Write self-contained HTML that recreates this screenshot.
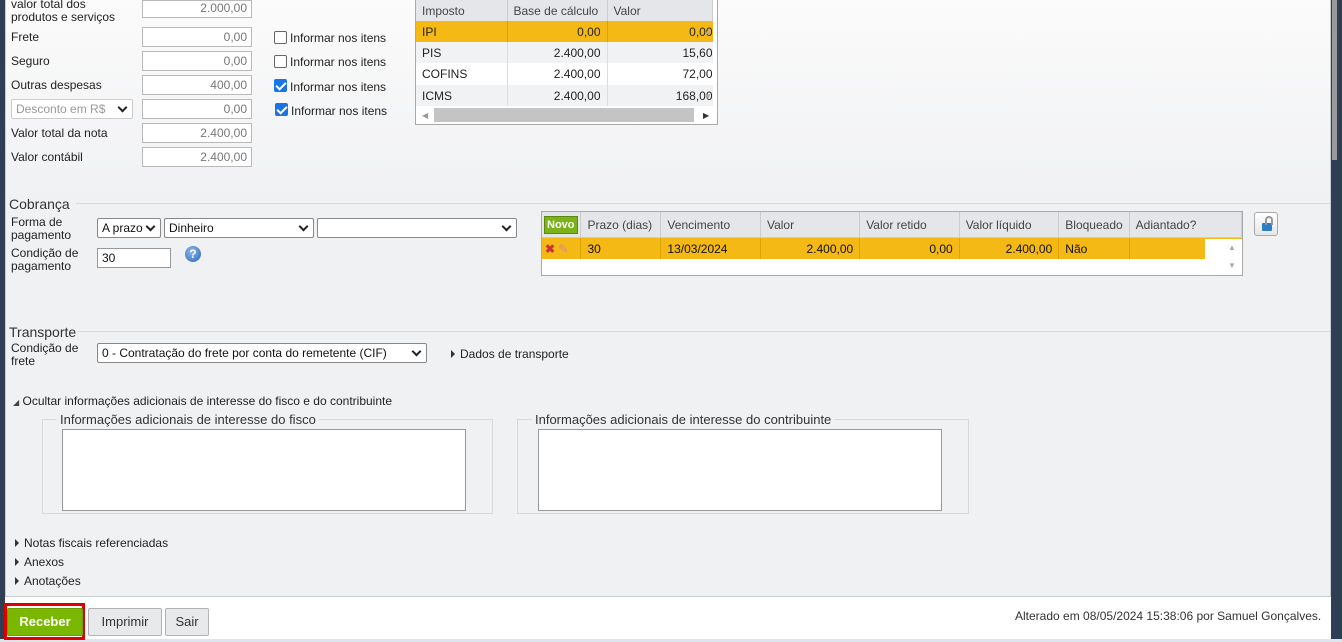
<!DOCTYPE html>
<html><head><meta charset="utf-8"><style>
*{box-sizing:border-box;margin:0;padding:0}
body{width:1342px;height:642px;overflow:hidden;background:#fff;font-family:"Liberation Sans",Verdana,sans-serif;font-size:12px;color:#222;position:relative}
.a{position:absolute}
.inp{position:absolute;background:#fff;border:1px solid #b9b9b9;height:20px;text-align:right;padding:2px 4px;color:#777;font-size:12px;width:110px}
.lbl{position:absolute;font-size:12px;color:#222}
.sel{position:absolute;background:#fff;border:1px solid #888;border-radius:2px;height:20px;padding:2px 4px;font-size:12px;color:#111}
.sel:after{content:"";position:absolute;right:6px;top:4px;width:5px;height:5px;border-right:2px solid #222;border-bottom:2px solid #222;transform:rotate(45deg)}
.cb{position:absolute;width:13px;height:13px;border:1px solid #666;border-radius:2px;background:#fff}
.cb.on{background:#1a73e8;border-color:#1a73e8}
.cb.on:after{content:"";position:absolute;left:3px;top:0px;width:4px;height:8px;border-right:2px solid #fff;border-bottom:2px solid #fff;transform:rotate(45deg)}
.hr{position:absolute;height:1px;background:#d6d8db}
.tri{display:inline-block;width:0;height:0;border-top:4px solid transparent;border-bottom:4px solid transparent;border-left:4px solid #333;margin-right:5px;vertical-align:0}
td,th{font-weight:normal;text-align:left;padding:0 6px;white-space:nowrap}
</style></head><body>
<div class="a" style="left:0;top:0;width:5px;height:642px;background:#2e3f55"></div>
<div class="a" style="left:1331px;top:0;width:11px;height:642px;background:#2e3f55"></div>
<div class="a" style="left:1332px;top:0;width:5px;height:160px;background:#9a9a9a"></div>
<div class="a" style="left:5px;top:0;width:1326px;height:597px;background:#f0f1f3;border:1px solid #c9ccd0;border-top:none"></div>
<div class="a" style="left:6px;top:0;width:1324px;height:200px;background:linear-gradient(#fbfbfb,#f0f1f3)"></div>
<div class="a" style="left:5px;top:597px;width:1326px;height:45px;background:#fff"></div>
<div class="a" style="left:0;top:639px;width:1342px;height:3px;background:#dfe5ee"></div>

<div class="lbl" style="left:11px;top:-2px;line-height:13px">valor total dos<br>produtos e serviços</div>
<div class="inp" style="left:142px;top:0px;height:18px;padding-top:0">2.000,00</div>
<div class="lbl" style="left:11px;top:30px">Frete</div><div class="inp" style="left:142px;top:27px">0,00</div>
<div class="lbl" style="left:11px;top:54px">Seguro</div><div class="inp" style="left:142px;top:51px">0,00</div>
<div class="lbl" style="left:11px;top:78px">Outras despesas</div><div class="inp" style="left:142px;top:75px">400,00</div>
<div class="sel" style="left:11px;top:99px;width:122px;border-color:#ccc;color:#999">Desconto em R$</div>
<div class="inp" style="left:142px;top:99px">0,00</div>
<div class="lbl" style="left:11px;top:126px">Valor total da nota</div><div class="inp" style="left:142px;top:123px">2.400,00</div>
<div class="lbl" style="left:11px;top:150px">Valor contábil</div><div class="inp" style="left:142px;top:147px">2.400,00</div>

<div class="cb" style="left:274px;top:31px"></div><div class="lbl" style="left:290px;top:31px">Informar nos itens</div>
<div class="cb" style="left:274px;top:55px"></div><div class="lbl" style="left:290px;top:55px">Informar nos itens</div>
<div class="cb on" style="left:274px;top:79px"></div><div class="lbl" style="left:290px;top:80px">Informar nos itens</div>
<div class="cb on" style="left:275px;top:103px"></div><div class="lbl" style="left:291px;top:104px">Informar nos itens</div>

<div class="a" style="left:415px;top:0;width:303px;height:125px;border:1px solid #a9a9a9;border-top:none;background:#fff;overflow:hidden">
<table style="border-collapse:collapse;font-size:12px;width:297px">
<tr style="height:21px;background:#e4e6e9;color:#444"><th style="width:91px;border-right:1px solid #ccc">Imposto</th><th style="width:100px;border-right:1px solid #ccc">Base de cálculo</th><th style="border-right:1px solid #ccc">Valor</th></tr>
<tr style="height:21px;background:#f4b914"><td style="border-right:1px solid #e0a000">IPI</td><td style="text-align:right;border-right:1px solid #e0a000">0,00</td><td style="text-align:right;padding-right:0">0,00</td></tr>
<tr style="height:21px;background:#f1f2f4"><td style="border-right:1px solid #ddd">PIS</td><td style="text-align:right;border-right:1px solid #ddd">2.400,00</td><td style="text-align:right;padding-right:0">15,60</td></tr>
<tr style="height:22px;background:#fff"><td style="border-right:1px solid #ddd">COFINS</td><td style="text-align:right;border-right:1px solid #ddd">2.400,00</td><td style="text-align:right;padding-right:0">72,00</td></tr>
<tr style="height:21px;background:#f1f2f4"><td style="border-right:1px solid #ddd">ICMS</td><td style="text-align:right;border-right:1px solid #ddd">2.400,00</td><td style="text-align:right;padding-right:0">168,00</td></tr>
</table>
<div class="a" style="left:18px;top:108px;width:260px;height:14px;background:#c4c4c4"></div>
<div class="a" style="left:6px;top:111px;font-size:8px;color:#999">◀</div>
<div class="a" style="left:287px;top:111px;font-size:8px;color:#333">▶</div>
<div class="a" style="left:288px;top:27px;font-size:8px;color:#aaa">▲</div>
<div class="a" style="left:288px;top:92px;font-size:8px;color:#aaa">▼</div>
</div>

<div class="lbl" style="left:9px;top:196px;font-size:14px;color:#333">Cobrança</div>
<div class="hr" style="left:76px;top:203px;width:1254px"></div>
<div class="lbl" style="left:11px;top:216px;line-height:13px">Forma de<br>pagamento</div>
<div class="sel" style="left:97px;top:218px;width:64px">A prazo</div>
<div class="sel" style="left:164px;top:218px;width:150px">Dinheiro</div>
<div class="sel" style="left:317px;top:218px;width:200px"></div>
<div class="lbl" style="left:11px;top:247px;line-height:13px">Condição de<br>pagamento</div>
<div class="inp" style="left:97px;top:248px;width:74px;text-align:left;color:#111;border-color:#999">30</div>
<div class="a" style="left:185px;top:246px;width:16px;height:16px;border-radius:50%;background:radial-gradient(circle at 40% 35%,#8cb8ee,#2a63b8);color:#fff;font-weight:bold;font-size:12px;text-align:center;line-height:16px">?</div>

<div class="a" style="left:541px;top:211px;width:702px;height:65px;border:1px solid #a9a9a9;background:#fff;overflow:hidden">
<div class="a" style="left:0;top:0;width:700px;height:26px;background:#e4e6e9;border-bottom:1px solid #ccc"></div>
<table style="position:absolute;left:0;top:0;border-collapse:collapse;font-size:12px">
<tr style="height:26px;color:#444"><th style="width:39px;border-right:1px solid #ccc;padding:0 2px"><span style="display:inline-block;background:#7ab317;color:#fff;font-weight:bold;font-size:11px;padding:2px 2px;border:1px solid #5c8a10">Novo</span></th><th style="width:80px;border-right:1px solid #ccc">Prazo (dias)</th><th style="width:100px;border-right:1px solid #ccc">Vencimento</th><th style="width:100px;border-right:1px solid #ccc">Valor</th><th style="width:100px;border-right:1px solid #ccc">Valor retido</th><th style="width:100px;border-right:1px solid #ccc">Valor líquido</th><th style="width:70px;border-right:1px solid #ccc">Bloqueado</th><th style="width:113px;border-right:1px solid #ccc">Adiantado?</th></tr>
<tr style="height:21px;background:#f4b914;color:#111"><td style="border-right:1px solid #e0a000;padding:0 3px"><span style="color:#c33;font-weight:bold">✖</span> <span style="color:#d88">✎</span></td><td style="border-right:1px solid #e0a000">30</td><td style="border-right:1px solid #e0a000">13/03/2024</td><td style="text-align:right;border-right:1px solid #e0a000">2.400,00</td><td style="text-align:right;border-right:1px solid #e0a000">0,00</td><td style="text-align:right;border-right:1px solid #e0a000">2.400,00</td><td style="border-right:1px solid #e0a000">Não</td><td></td></tr>
</table>
<div class="a" style="left:663px;top:27px;width:37px;height:37px;background:#fff"></div>
<div class="a" style="left:686px;top:31px;font-size:8px;color:#aaa">▲</div>
<div class="a" style="left:686px;top:49px;font-size:8px;color:#aaa">▼</div>
</div>
<div class="a" style="left:1254px;top:212px;width:24px;height:24px;border:1px solid #aaa;border-radius:3px;background:linear-gradient(#fff,#e6e6e6)"><div style="position:absolute;left:7px;top:10px;width:10px;height:8px;background:#2a7fc8;border-radius:1px"></div><div style="position:absolute;left:10px;top:3px;width:8px;height:9px;border:2px solid #999;border-bottom:none;border-radius:4px 4px 0 0"></div></div>

<div class="lbl" style="left:9px;top:324px;font-size:14px;color:#333">Transporte</div>
<div class="hr" style="left:78px;top:331px;width:1252px"></div>
<div class="lbl" style="left:11px;top:342px;line-height:13px">Condição de<br>frete</div>
<div class="sel" style="left:97px;top:343px;width:330px">0 - Contratação do frete por conta do remetente (CIF)</div>
<div class="lbl" style="left:451px;top:347px"><span class="tri"></span>Dados de transporte</div>

<div class="lbl" style="left:13px;top:394px"><span style="font-size:8px;color:#444">◢</span> Ocultar informações adicionais de interesse do fisco e do contribuinte</div>
<div class="a" style="left:42px;top:419px;width:451px;height:95px;border:1px solid #d6d8db"></div>
<div class="lbl" style="left:57px;top:412px;font-size:13px;background:#f0f1f3;padding:0 3px;color:#333">Informações adicionais de interesse do fisco</div>
<div class="a" style="left:62px;top:429px;width:404px;height:82px;border:1px solid #999;background:#fff"></div>
<div class="a" style="left:517px;top:419px;width:452px;height:95px;border:1px solid #d6d8db"></div>
<div class="lbl" style="left:532px;top:412px;font-size:13px;background:#f0f1f3;padding:0 3px;color:#333">Informações adicionais de interesse do contribuinte</div>
<div class="a" style="left:538px;top:429px;width:404px;height:82px;border:1px solid #999;background:#fff"></div>

<div class="lbl" style="left:15px;top:536px"><span class="tri"></span>Notas fiscais referenciadas</div>
<div class="lbl" style="left:15px;top:555px"><span class="tri"></span>Anexos</div>
<div class="lbl" style="left:15px;top:574px"><span class="tri"></span>Anotações</div>

<div class="a" style="left:4px;top:603px;width:81px;height:37px;border:3px solid #e00000"></div>
<div class="a" style="left:7px;top:608px;width:76px;height:28px;background:#7ab800;border:1px solid #6a9e00;border-radius:2px;color:#fff;font-weight:bold;font-size:13px;text-align:center;line-height:26px">Receber</div>
<div class="a" style="left:88px;top:608px;width:74px;height:28px;background:#e8e9eb;border:1px solid #b3b3b3;border-radius:2px;color:#333;font-size:13px;text-align:center;line-height:26px">Imprimir</div>
<div class="a" style="left:165px;top:608px;width:44px;height:28px;background:#e8e9eb;border:1px solid #b3b3b3;border-radius:2px;color:#333;font-size:13px;text-align:center;line-height:26px">Sair</div>
<div class="lbl" style="left:1015px;top:609px;color:#333">Alterado em 08/05/2024 15:38:06 por Samuel Gonçalves.</div>
</body></html>
